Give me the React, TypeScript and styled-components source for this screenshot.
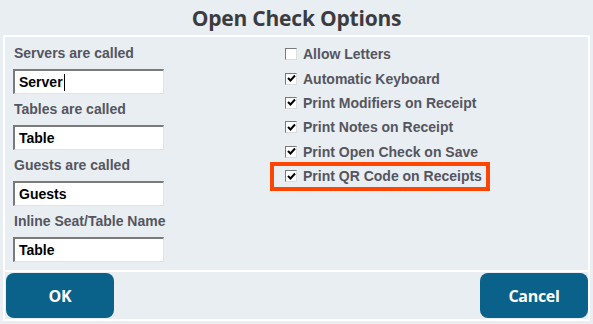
import React from 'react'
import styled, {createGlobalStyle} from 'styled-components'

const GlobalStyle = createGlobalStyle`
  html, body {
    margin: 0;
    padding: 0;
    background: #e9eef2;
  }
`

const names = [
  {label: 'Servers are called', value: 'Server', caret: true},
  {label: 'Tables are called', value: 'Table'},
  {label: 'Guests are called', value: 'Guests'},
  {label: 'Inline Seat/Table Name', value: 'Table'},
]

const options = [
  {label: 'Allow Letters', checked: false},
  {label: 'Automatic Keyboard', checked: true},
  {label: 'Print Modifiers on Receipt', checked: true},
  {label: 'Print Notes on Receipt', checked: true},
  {label: 'Print Open Check on Save', checked: true},
  {label: 'Print QR Code on Receipts', checked: true, highlight: true},
]

function CheckBox({checked}: {checked: boolean}): JSX.Element {
  return (
    <Box>
      {checked ? (
        <svg width='9' height='9' viewBox='0 0 9 9'>
          <path d='M1 4 L3.5 6.5 L8 1.5' stroke='#000' strokeWidth='2' fill='none' />
        </svg>
      ) : null}
    </Box>
  )
}

export default function App(): JSX.Element {
  return (
    <Page>
      <GlobalStyle />
      <Title>Open Check Options</Title>
      <Frame>
        <Body>
          <Names>
            {names.map((n) => (
              <Field key={n.label}>
                <FieldLabel>{n.label}</FieldLabel>
                <TextInput>
                  {n.value}
                  {n.caret ? <Caret /> : null}
                </TextInput>
              </Field>
            ))}
          </Names>
          <Options>
            {options.map((o) => (
              <Option key={o.label} highlight={!!o.highlight}>
                <CheckBox checked={o.checked} />
                <OptionLabel>{o.label}</OptionLabel>
              </Option>
            ))}
          </Options>
        </Body>
        <Footer>
          <Button>OK</Button>
          <Button>Cancel</Button>
        </Footer>
      </Frame>
    </Page>
  )
}

const Page = styled.div`
  width: 593px;
  height: 324px;
  background: #e9eef2;
  overflow: hidden;
`

const Title = styled.h1`
  margin: 0;
  height: 35px;
  display: flex;
  align-items: center;
  justify-content: center;
  font-family: 'Open Sans', sans-serif;
  font-weight: 700;
  font-size: 21px;
  letter-spacing: -0.2px;
  color: #3b3b40;
`

const Frame = styled.div`
  margin: 0 3px 0 3px;
  height: 286px;
  border: 2px solid #fff;
  box-sizing: border-box;
  display: flex;
  flex-direction: column;
`

const Body = styled.div`
  height: 235px;
  display: flex;
  border-bottom: 2px solid #fff;
  box-sizing: border-box;
  padding: 8px 0 0 8px;
`

const Names = styled.div`
  width: 265px;
  display: flex;
  flex-direction: column;
`

const Field = styled.div`
  display: flex;
  flex-direction: column;
  height: 56px;
`

const FieldLabel = styled.div`
  font-family: 'Liberation Sans', Arial, sans-serif;
  font-weight: 700;
  font-size: 14px;
  line-height: 17px;
  color: #55555f;
  margin-left: 1px;
  margin-bottom: 7px;
`

const TextInput = styled.div`
  width: 151px;
  height: 25px;
  box-sizing: border-box;
  background: #fff;
  border-style: solid;
  border-width: 2px 1px 1px 2px;
  border-color: #7a7a7a #e2e2e2 #e2e2e2 #7a7a7a;
  display: flex;
  align-items: center;
  padding-left: 4px;
  font-family: 'Liberation Sans', Arial, sans-serif;
  font-weight: 700;
  font-size: 14px;
  color: #000;
`

const Caret = styled.span`
  display: inline-block;
  width: 1px;
  height: 17px;
  background: #000;
  margin-left: 1px;
`

const Options = styled.div`
  display: flex;
  flex-direction: column;
  align-items: flex-start;
  margin-top: -3px;
`

const Option = styled.div<{highlight: boolean}>`
  display: flex;
  align-items: center;
  gap: 6px;
  height: 24.4px;
  box-sizing: border-box;
  white-space: nowrap;
  margin-left: ${(p) => (p.highlight ? '-8px' : '7px')};
  ${(p) =>
    p.highlight
      ? 'border: 4px solid #ff4500; height: 29px; margin-top: -2px; padding: 0 4px 0 11px;'
      : ''}
`

const Box = styled.div`
  width: 12px;
  height: 12px;
  box-sizing: border-box;
  background: #fff;
  border-style: solid;
  border-width: 1px;
  border-color: #7a7a7a #dcdcdc #dcdcdc #7a7a7a;
  display: flex;
  align-items: center;
  justify-content: center;
`

const OptionLabel = styled.span`
  font-family: 'Liberation Sans', Arial, sans-serif;
  font-weight: 700;
  font-size: 14px;
  color: #55555f;
`

const Footer = styled.div`
  flex: 1;
  display: flex;
  justify-content: space-between;
  align-items: flex-start;
  padding: 1px 0 0 1px;
`

const Button = styled.button`
  width: 108px;
  height: 45px;
  border: none;
  border-radius: 8px;
  background: #0a6189;
  color: #fff;
  font-family: 'Open Sans', sans-serif;
  font-weight: 700;
  font-size: 16px;
  letter-spacing: -0.3px;
  cursor: pointer;
`
